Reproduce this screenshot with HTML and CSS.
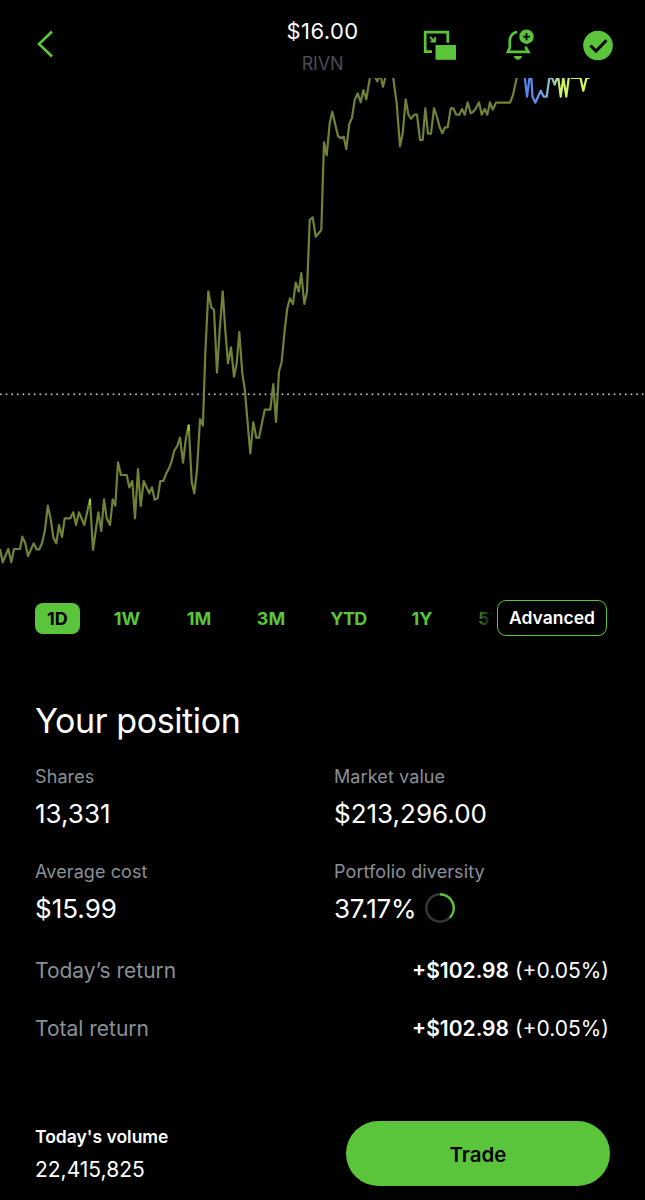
FILE: index.html
```html
<!DOCTYPE html>
<html lang="en">
<head>
  <meta charset="utf-8">
  <title>RIVN</title>
  <link rel="stylesheet" href="styles.css">
</head>
<body>
  <header class="topbar">
    <svg class="back" width="18" height="30" viewBox="0 0 18 30"><path d="M16 2.500L3 15l13 12.500"/></svg>
    <div class="quote">
      <div class="price">$16.00</div>
      <div class="ticker">RIVN</div>
    </div>
    <div class="actions">
      <svg width="34" height="32" viewBox="0 0 34 32">
        <path class="line" d="M9 22.700H2.200V3.200h22.600v10.500"/>
        <path class="line thin" d="M7 8l4.500 4.500M12 8v4.500H7.500"/>
        <path class="fill" d="M12.500 16H33v14.800H12.500z"/>
      </svg>
      <svg width="30" height="32" viewBox="0 0 30 32">
        <path class="line" d="M12 2.800C7.500 4.200 4.800 7.500 4.800 12v6.500L3 22.800h20.300L21 19v-1.500"/>
        <path class="fill" d="M9 27h8c-.5 5-7.500 5-8 0z"/>
        <circle class="fill" cx="21.500" cy="7.700" r="7.200"/>
        <path class="cut" d="M21.500 4.200v7M18 7.700h7"/>
      </svg>
      <svg width="30" height="32" viewBox="0 0 30 32">
        <circle class="fill" cx="15" cy="16.500" r="14.800"/>
        <path class="cut check" d="M7.500 16.500l5.500 5.500L23.500 11.300"/>
      </svg>
    </div>
  </header>

  <svg class="chart" width="645" height="507" viewBox="0 78 645 507">
    <defs>
      <linearGradient id="live" gradientUnits="userSpaceOnUse" x1="524" y1="0" x2="590" y2="0">
        <stop offset="0" stop-color="#5484ee"/>
        <stop offset=".2" stop-color="#5b92f4"/>
        <stop offset=".36" stop-color="#83bad2"/>
        <stop offset=".48" stop-color="#a2c8a2"/>
        <stop offset=".55" stop-color="#d0f05e"/>
        <stop offset="1" stop-color="#d6f85d"/>
      </linearGradient>
    </defs>
    <line class="baseline" x1="0.900" y1="394.300" x2="645" y2="394.300"/>
    <polyline class="trend" points="0,549 2.700,562.300 8.300,549 11.300,562.300 14,549 20,549 22.300,536.700 25.300,543.300 28,556 33.700,543.300 36.500,549.300 39.300,549.300 42,543.300 45,530 47.800,505.700 50.700,519 53.300,537.300 56.300,543.300 59,525 62,537 64.700,518.300 70.300,518.300 73.300,512.300 76,525 79,512.300 84.300,525 90,499.300 93,550 98.300,512.300 101.300,531 104,499.300 106.700,518.300 110,525 112.700,499.300 115.300,505.700 118,462.300 121,475 126.700,475 129.300,487.300 132.300,481 135,518.300 138,469 140.700,506 143.700,481 149.300,493.300 152,487.300 154.700,499.700 157.700,498 160.300,481 163.300,481 166,474 169,468.300 171.700,461 174.300,450.700 177.300,446 180,437.700 183,462.700 186,437.700 188.700,425 191.700,481.700 194.300,493.300 197,470 200,419 202.900,425.500 205.300,353.300 208.300,291.300 211.300,307.300 214,310 217,372.700 219.700,330 222.700,291.300 225.300,330 228,363.300 231,347.300 234,376.700 236.700,363.300 239.300,332 242.300,373.300 244.700,388.300 247.700,423.300 250.300,453.300 253.300,422 256.300,437.700 259,437.700 264.700,409.700 270.300,409.700 273.300,384 276,422 279,371.700 281.700,361.700 284.700,330 287.300,308.300 290,298.300 293,304 295.700,282.700 298.700,291.700 301.300,273 304.300,304 307,291.700 309.700,220 312.700,217.300 315.700,236.700 321.300,230 324,142.300 326.700,155.300 329.700,123.300 332.300,111.700 338,136 340.700,138 343.700,136.700 346.300,149 349.300,124 352,117.700 354.700,100 357.700,93.300 360.700,102.300 363.300,90 366.300,99.300 370,77 375,77 377.300,81.300 379.500,76 381,78 383,86.700 385.700,76 393,76 396.700,103.300 400,146.300 402.700,133.300 405.700,99.300 408.300,114.300 411,118.700 414.300,114.700 417,114.700 420,140 422.700,140 425.300,108.300 428,133.700 431,133.700 434,108.300 436.700,116 439.700,127.300 442.300,133.300 445,127.300 447.700,127.300 450.700,108.300 453.300,108.300 456.300,114.700 459.300,114.700 462,109 464.700,114.700 467.700,102.300 470.700,113.300 473.300,111.700 476,108.300 479,102.300 481.700,114.700 484.700,109 487.300,114.700 490,102.300 492.700,109.700 496,102.700 510,102.700 513,95 516.700,78 517,76"/>
    <polyline class="trend live" points="524.600,76 527,96.700 529.500,77.500 531.300,77.500 532.500,96.700 535.300,102.700 540.700,90.700 543.700,96.700 546.700,96.700 549.300,78 552,78 554.700,84.700 557,78 558.300,78 560.700,96.700 563.300,78 566.300,96.700 569,76"/>
    <polyline class="trend live" points="571,78 580.500,78 583.300,90.700 586.500,78 589.500,78"/>
    <path class="peak" d="M90 499v6M188.700 425v6"/>
  </svg>

  <nav class="ranges">
    <div class="range active">1D</div>
    <div class="range">1W</div>
    <div class="range">1M</div>
    <div class="range">3M</div>
    <div class="range ytd">YTD</div>
    <div class="range">1Y</div>
    <div class="range faded">5Y</div>
    <div class="advanced">Advanced</div>
  </nav>

  <main class="position">
    <h1>Your position</h1>
    <div class="stats">
      <div class="stat">
        <div class="label">Shares</div>
        <div class="value">13,331</div>
      </div>
      <div class="stat">
        <div class="label">Market value</div>
        <div class="value">$213,296.00</div>
      </div>
      <div class="stat">
        <div class="label">Average cost</div>
        <div class="value">$15.99</div>
      </div>
      <div class="stat">
        <div class="label">Portfolio diversity</div>
        <div class="value percent">37.17%
          <svg class="ring" width="30" height="30" viewBox="0 0 30 30">
            <circle cx="15" cy="15" r="13.700"/>
            <path d="M15 1.300A13.700 13.700 0 0 1 24.700 24.700"/>
          </svg>
        </div>
      </div>
    </div>
    <div class="return">
      <span class="name">Today’s return</span>
      <span class="amount"><b>+$102.98</b> (+0.05%)</span>
    </div>
    <div class="return">
      <span class="name">Total return</span>
      <span class="amount"><b>+$102.98</b> (+0.05%)</span>
    </div>
  </main>

  <footer class="bottom">
    <div class="volume">
      <div class="volume-label">Today's volume</div>
      <div class="volume-value">22,415,825</div>
    </div>
    <button class="trade">Trade</button>
  </footer>
</body>
</html>
```
FILE: styles.css
```css
* {
  box-sizing: border-box;
}
body {
  margin: 0;
  width: 645px;
  height: 1200px;
  overflow: hidden;
  display: flex;
  flex-direction: column;
  background: #000;
  color: #fff;
  font-family: Inter, "Liberation Sans", sans-serif;
}

/* top bar */
.topbar {
  height: 78px;
  flex: none;
  display: grid;
  grid-template-columns: 1fr 90px 1fr;
  padding: 0 32px 0 36px;
}
.back {
  margin-top: 29px;
  fill: none;
  stroke: #5ac53b;
  stroke-width: 2.6;
}
.quote {
  text-align: center;
  padding-top: 17px;
  margin-left: -4px;
}
.price {
  font-size: 22px;
  line-height: 28px;
  letter-spacing: 0.4px;
}
.ticker {
  font-size: 18px;
  line-height: 24px;
  margin-top: 7px;
  letter-spacing: -0.2px;
  color: #4a4d51;
}
.actions {
  display: flex;
  justify-content: flex-end;
  gap: 48px;
  padding-top: 29px;
}
.line {
  fill: none;
  stroke: #5ac53b;
  stroke-width: 2.7;
}
.thin {
  stroke-width: 1.8;
}
.fill {
  fill: #5ac53b;
}
.cut {
  fill: none;
  stroke: #000;
  stroke-width: 1.8;
}
.check {
  stroke-width: 3;
}

/* chart */
.chart {
  display: block;
  flex: none;
}
.baseline {
  stroke: #b4b4b4;
  stroke-width: 2;
  stroke-linecap: round;
  stroke-dasharray: 0 5.63;
}
.trend {
  fill: none;
  stroke: #728138;
  stroke-width: 2.2;
  stroke-linejoin: round;
}
.live {
  stroke: url(#live);
}
.peak {
  stroke: #9fc93c;
  stroke-width: 2;
}

/* time ranges */
.ranges {
  display: flex;
  align-items: center;
  height: 66px;
  flex: none;
  padding-left: 35px;
  font-size: 18px;
  font-weight: 700;
  color: #5ac53b;
}
.range {
  width: 72px;
  text-align: center;
}
.range:nth-child(2) {
  margin-left: 11px;
}
.range.ytd {
  width: 83px;
  letter-spacing: -0.6px;
}
.range:nth-child(6) {
  width: 64px;
}
.range.active {
  width: 45px;
  height: 31px;
  line-height: 31px;
  border-radius: 8px;
  background: #5ac53b;
  color: #000;
}
.range.faded {
  width: 43px;
  padding-left: 24px;
  text-align: left;
  white-space: nowrap;
  background: linear-gradient(90deg, #5ac53b 40%, #000 92%);
  background-clip: text;
  -webkit-background-clip: text;
  color: transparent;
}
.advanced {
  width: 110px;
  height: 36px;
  line-height: 34px;
  border: 1.5px solid #5ac53b;
  border-radius: 9px;
  text-align: center;
  font-size: 17.5px;
  font-weight: 600;
  color: #fff;
}

/* position */
.position {
  height: 415px;
  padding: 49px 36px 0 35px;
}
h1 {
  margin: 0;
  font-size: 34px;
  line-height: 42px;
  font-weight: 400;
  letter-spacing: -0.4px;
}
.stats {
  display: grid;
  grid-template-columns: 299px 1fr;
  row-gap: 30px;
  margin-top: 23px;
}
.label {
  font-size: 18px;
  line-height: 24px;
  letter-spacing: 0.1px;
  color: #8a9096;
}
.value {
  display: flex;
  align-items: center;
  gap: 11px;
  height: 34px;
  margin-top: 7px;
  font-size: 26px;
}
.percent {
  letter-spacing: -0.2px;
  gap: 9px;
}
.return {
  display: flex;
  justify-content: space-between;
  height: 30px;
  line-height: 30px;
  font-size: 21px;
}
.ring circle,
.ring path {
  fill: none;
  stroke: #34383a;
  stroke-width: 2.4;
}
.ring path {
  stroke: #5ac53b;
}
.stats + .return {
  margin-top: 31px;
  margin-bottom: 28px;
}
.name {
  color: #8a9096;
}
.amount b {
  font-weight: 600;
}

/* footer */
.bottom {
  display: flex;
  justify-content: space-between;
  padding: 55px 35px 0;
}
.volume-label {
  margin-top: 4px;
  font-size: 17.5px;
  line-height: 24px;
  font-weight: 600;
}
.volume-value {
  margin-top: 8px;
  font-size: 21px;
  line-height: 26px;
}
.trade {
  width: 264px;
  height: 65px;
  padding-top: 3px;
  border: none;
  border-radius: 33px;
  background: #5ac53b;
  color: #000;
  font-family: inherit;
  font-size: 20.5px;
  font-weight: 600;
}
```
